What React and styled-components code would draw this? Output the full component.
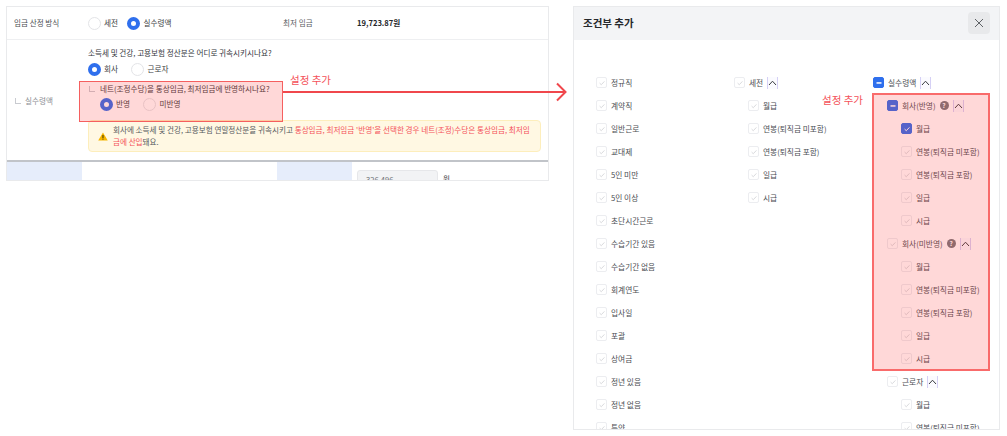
import React from 'react';
import styled, { createGlobalStyle } from 'styled-components';

const GlobalStyle = createGlobalStyle`
  html, body {
    margin: 0;
    background: #fff;
    font-family: 'Noto Sans CJK KR', 'Noto Sans', sans-serif;
    color: #3a3d42;
  }
  * { box-sizing: border-box; }
`;

const Page = styled.div`
  position: relative;
  display: flex;
  align-items: flex-start;
  gap: 24px;
  width: 1007px;
  height: 436px;
  padding: 6px 0 0 6px;
  overflow: hidden;
`;

const Panel = styled.section`
  width: 543px;
  height: 175px;
  border: 1px solid #e9eaec;
  overflow: hidden;
  font-size: 7.6px;
  line-height: 12px;
`;

const TopRow = styled.div`
  display: flex;
  align-items: center;
  height: 33px;
  border-bottom: 1px solid #eeeff1;
`;

const RowLabel = styled.div`
  flex: none;
  width: 81px;
  padding-left: 7px;
  color: ${(p) => (p.$muted ? '#8a8d92' : '#4a4d52')};
  display: flex;
  align-items: center;
  gap: 4px;
`;

const RadioGroup = styled.div`
  display: flex;
  align-items: center;
  gap: ${(p) => p.$gap || 13.5}px;
  height: 14px;
  width: ${(p) => p.$width || 'auto'};
`;

const RadioItem = styled.label`
  display: flex;
  align-items: center;
  gap: 3px;
`;

const RadioDot = styled.span`
  flex: none;
  width: 13px;
  height: 13px;
  border-radius: 50%;
  border: ${(p) => (p.$on ? '4px solid #2f6fed' : '1px solid #e3e4e7')};
  background: #fff;
`;

const InfoLabel = styled.div`
  width: 74px;
  color: #5a5d62;
`;

const InfoValue = styled.div`
  font-weight: 700;
  color: #25272b;
`;

const SettingRow = styled.div`
  display: flex;
  align-items: stretch;
  height: 120px;
`;

const SettingLabel = styled(RowLabel)`
  padding-top: 2px;
`;

const SettingBody = styled.div`
  flex: 1;
  padding-top: 7px;
`;

const Question = styled.div`
  height: 12px;
  color: #33363b;
`;

const SubRadios = styled.div`
  margin: 3px 0 5px;
`;

const Marked = styled.div`
  position: relative;
  z-index: 1;
  width: 195px;
  height: 41px;
  &::after {
    content: '';
    position: absolute;
    inset: 0 0 0 -9px;
    border: 1.5px solid #f55f5f;
    background: rgba(255, 50, 50, 0.19);
  }
`;

const SubQuestion = styled.div`
  display: flex;
  align-items: center;
  gap: 5px;
  height: 15px;
  padding-top: 1px;
  white-space: nowrap;
`;

const Corner = styled.span`
  flex: none;
  width: 6px;
  height: 6px;
  margin-left: 1px;
  border-left: 1px solid #c9cbd0;
  border-bottom: 1px solid #c9cbd0;
`;

const IndentedRadios = styled.div`
  padding: 1px 0 0 12px;
`;

const Warning = styled.div`
  display: flex;
  align-items: center;
  gap: 5px;
  width: 453px;
  height: 32px;
  margin-top: -2px;
  padding: 0 9px;
  background: #fff8e3;
  border: 1px solid #fdeebc;
  border-radius: 4px;
  color: #55585d;
`;

const WarningText = styled.p`
  margin: 0;
  width: 420px;
  word-break: break-all;
`;

const Red = styled.span`
  color: #f4515a;
`;

const AmountRow = styled.div`
  display: flex;
  height: 21px;
  border-top: 2px solid #c1c4c9;
`;

const BlueCell = styled.div`
  flex: none;
  width: 75px;
  background: #e6edfb;
`;

const BlankCell = styled.div`
  flex: none;
  width: 195px;
`;

const AmountCell = styled.div`
  display: flex;
  align-items: flex-start;
  gap: 5px;
  padding: 8px 0 0 5px;
`;

const AmountInput = styled.div`
  width: 81px;
  height: 24px;
  padding: 3px 8px;
  background: #f2f3f5;
  border: 1px solid #e6e7ea;
  border-radius: 3px;
  color: #6a6d72;
`;

const AmountUnit = styled.span`
  padding-top: 3px;
`;

const Modal = styled.section`
  width: 427px;
  height: 424px;
  border: 1px solid #e9eaec;
  overflow: hidden;
  font-size: 7.7px;
`;

const ModalHeader = styled.header`
  display: flex;
  align-items: center;
  justify-content: space-between;
  height: 33px;
  padding: 0 9px 2px;
  background: #f3f4f6;
`;

const ModalTitle = styled.h2`
  margin: 0;
  font-size: 10.5px;
  font-weight: 700;
  color: #26282c;
`;

const CloseButton = styled.button`
  display: flex;
  align-items: center;
  justify-content: center;
  width: 22px;
  height: 22px;
  padding: 0;
  border: 0;
  border-radius: 4px;
  background: #e8e9eb;
  color: #5f6266;
`;

const Columns = styled.div`
  display: grid;
  grid-template-columns: 138px 139px 1fr;
  padding: 31px 10px 0 22px;
`;

const Row = styled.div`
  display: flex;
  align-items: center;
  gap: 4px;
  height: 23px;
  padding-left: ${(p) => p.$depth * 14}px;
  color: #4a4d52;
  white-space: nowrap;
`;

const Box = styled.span`
  flex: none;
  display: flex;
  align-items: center;
  justify-content: center;
  width: 11px;
  height: 11px;
  border: 1px solid ${(p) => (p.$state ? p.$tone : '#ecedf0')};
  border-radius: 2px;
  background: ${(p) => (p.$state ? p.$tone : '#fff')};
`;

const Toggle = styled.span`
  flex: none;
  display: flex;
  align-items: center;
  justify-content: center;
  width: 11px;
  height: 12px;
  border-left: 1px solid #d5d0f5;
  border-right: 1px solid #d5d0f5;
  background: #fbfbff;
  color: #3a3d42;
`;

const HelpDot = styled.span`
  flex: none;
  width: 9px;
  height: 9px;
  border-radius: 50%;
  background: #77787c;
  color: #fff;
  font-size: 6.5px;
  font-weight: 700;
  line-height: 9px;
  text-align: center;
`;

const MarkedGroup = styled.div`
  position: relative;
  &::after {
    content: '';
    position: absolute;
    inset: -1px;
    border: 2px solid #f96b6b;
    background: rgba(255, 50, 50, 0.19);
  }
`;

const Note = styled.span`
  position: absolute;
  color: #f4525a;
  font-size: 10.5px;
  line-height: 14px;
  white-space: nowrap;
  left: ${(p) => p.$left}px;
  top: ${(p) => p.$top}px;
  z-index: 2;
`;

const ArrowLayer = styled.svg`
  position: absolute;
  left: 283px;
  top: 82px;
  pointer-events: none;
`;

const CheckMark = ({ color }) => (
  <svg width="8" height="8" viewBox="0 0 8 8" fill="none">
    <path d="M1.6 4.1 3.3 5.7 6.4 2.4" stroke={color} strokeWidth="1" />
  </svg>
);

const Chevron = () => (
  <svg width="9" height="8" viewBox="0 0 9 8" fill="none">
    <path d="M1 6 4.5 2.2 8 6" stroke="currentColor" strokeWidth="1" />
  </svg>
);

const Check = ({ state, tone = '#2f6fed' }) => (
  <Box $state={state} $tone={tone}>
    {state === 'partial' && (
      <svg width="8" height="8" viewBox="0 0 8 8">
        <rect x="1.5" y="3.2" width="5" height="1.5" fill="#fff" />
      </svg>
    )}
    {state === 'checked' && <CheckMark color="#fff" />}
    {!state && <CheckMark color="#d9dadd" />}
  </Box>
);

const Option = ({ label, depth = 0, state, toggle, help }) => (
  <Row $depth={depth}>
    <Check state={state} />
    <span>{label}</span>
    {help && <HelpDot>?</HelpDot>}
    {toggle && (
      <Toggle>
        <Chevron />
      </Toggle>
    )}
  </Row>
);

const PayOptions = ({ depth, first }) => (
  <>
    <Option label="월급" depth={depth} state={first} />
    <Option label="연봉(퇴직금 미포함)" depth={depth} />
    <Option label="연봉(퇴직금 포함)" depth={depth} />
    <Option label="일급" depth={depth} />
    <Option label="시급" depth={depth} />
  </>
);

const generalOptions = [
  '정규직', '계약직', '일반근로', '교대제', '5인 미만', '5인 이상', '초단시간근로', '수습기간 있음',
  '수습기간 없음', '회계연도', '입사일', '포괄', '상여금', '정년 있음', '정년 없음', '특약',
];

const App = () => (
  <Page>
    <GlobalStyle />
    <Panel>
      <TopRow>
        <RowLabel>임금 산정 방식</RowLabel>
        <RadioGroup $width="195px" $gap={9.5}>
          <RadioItem><RadioDot />세전</RadioItem>
          <RadioItem><RadioDot $on />실수령액</RadioItem>
        </RadioGroup>
        <InfoLabel>최저 임금</InfoLabel>
        <InfoValue>19,723.87원</InfoValue>
      </TopRow>
      <SettingRow>
        <SettingLabel $muted>
          <Corner />
          실수령액
        </SettingLabel>
        <SettingBody>
          <Question>소득세 및 건강, 고용보험 정산분은 어디로 귀속시키시나요?</Question>
          <SubRadios>
            <RadioGroup>
              <RadioItem><RadioDot $on />회사</RadioItem>
              <RadioItem><RadioDot />근로자</RadioItem>
            </RadioGroup>
          </SubRadios>
          <Marked>
            <SubQuestion>
              <Corner />
              네트(조정수당)을 통상임금, 최저임금에 반영하시나요?
            </SubQuestion>
            <IndentedRadios>
              <RadioGroup>
                <RadioItem><RadioDot $on />반영</RadioItem>
                <RadioItem><RadioDot />미반영</RadioItem>
              </RadioGroup>
            </IndentedRadios>
          </Marked>
          <Warning>
            <svg width="10" height="9" viewBox="0 0 10 9">
              <path d="M5 .4 9.8 8.6H.2Z" fill="#f6b500" />
              <rect x="4.5" y="3" width="1" height="3" fill="#3a3000" />
              <rect x="4.5" y="6.6" width="1" height="1" fill="#3a3000" />
            </svg>
            <WarningText>
              회사에 소득세 및 건강, 고용보험 연말정산분을 귀속시키고{' '}
              <Red>통상임금, 최저임금 '반영'을 선택한 경우 네트(조정)수당은 통상임금, 최저임금에 산입</Red>
              돼요.
            </WarningText>
          </Warning>
        </SettingBody>
      </SettingRow>
      <AmountRow>
        <BlueCell />
        <BlankCell />
        <BlueCell />
        <AmountCell>
          <AmountInput>326,496</AmountInput>
          <AmountUnit>원</AmountUnit>
        </AmountCell>
      </AmountRow>
    </Panel>

    <Modal>
      <ModalHeader>
        <ModalTitle>조건부 추가</ModalTitle>
        <CloseButton aria-label="닫기">
          <svg width="10" height="10" viewBox="0 0 10 10" fill="none">
            <path d="M1 1 9 9M9 1 1 9" stroke="currentColor" strokeWidth="1" />
          </svg>
        </CloseButton>
      </ModalHeader>
      <Columns>
        <div>
          {generalOptions.map((label) => (
            <Option key={label} label={label} />
          ))}
        </div>
        <div>
          <Option label="세전" toggle />
          <PayOptions depth={1} />
        </div>
        <div>
          <Option label="실수령액" state="partial" toggle />
          <MarkedGroup>
            <Option label="회사(반영)" depth={1} state="partial" help toggle />
            <PayOptions depth={2} first="checked" />
            <Option label="회사(미반영)" depth={1} help toggle />
            <PayOptions depth={2} />
          </MarkedGroup>
          <Option label="근로자" depth={1} toggle />
          <PayOptions depth={2} />
        </div>
      </Columns>
    </Modal>

    <Note $left={290} $top={73}>설정 추가</Note>
    <Note $left={822} $top={93}>설정 추가</Note>
    <ArrowLayer width="286" height="20" viewBox="0 0 286 20" fill="none">
      <path d="M0 10H281" stroke="#f0474c" strokeWidth="2" />
      <path d="M274 1.5 282.5 10 274 18.5" stroke="#f0474c" strokeWidth="2" />
    </ArrowLayer>
  </Page>
);

export default App;
